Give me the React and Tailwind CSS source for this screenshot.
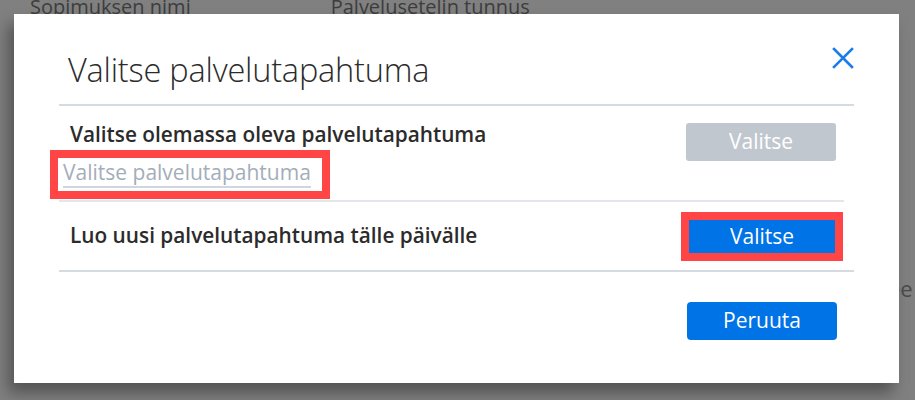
import React from 'react';

const font = { fontFamily: '"Open Sans", "Noto Sans", sans-serif' };

const App = () => {
  return (
    <div className="relative w-[915px] h-[400px] overflow-hidden bg-[#808080]" style={font}>
      {/* page behind the overlay */}
      <div className="flex gap-[140px] pl-[30px] -mt-[8px] text-[20px] text-[#3d3d3d]">
        <span>Sopimuksen nimi</span>
        <span>Palvelusetelin tunnus</span>
      </div>
      <div className="absolute left-[888px] top-[272px] text-[22px] text-[#4a4a4a]">ee</div>

      {/* modal */}
      <div className="absolute left-[14px] top-[14px] w-[885px] h-[369px] bg-white shadow-[-6px_10px_14px_rgba(0,0,0,0.35)]">
        <div className="px-[45px] pt-[34px]">
          <div className="flex items-start justify-between pl-[9px] pr-[0px]">
            <h1 className="text-[32.5px] font-light text-[#2b2b2b] leading-[44px] tracking-[-0.2px]">Valitse palvelutapahtuma</h1>
            <button className="text-[#1a7ee6] mt-[-1px]">
              <svg width="22" height="22" viewBox="0 0 22 22" fill="none" stroke="currentColor" strokeWidth="2.6" strokeLinecap="square">
                <path d="M2 2 L20 20 M20 2 L2 20" />
              </svg>
            </button>
          </div>
          <div className="mt-[12px] h-[2px] bg-[#d5dbe1]" />

          <div className="flex justify-between pt-[15px] h-[96px] border-b-2 border-[#e3e7eb] mr-[10px]">
            <div className="pl-[11px]">
              <div className="text-[20.8px] font-semibold text-[#2b2b2b] leading-[26px]">Valitse olemassa oleva palvelutapahtuma</div>
              <div className="-ml-[20px] mt-[3px] inline-block border-[8px] border-[#ff4545] pl-[5px] pr-[11px] h-[49px]">
                <span className="block text-[21px] text-[#a3adba] leading-[28px] border-b-2 border-[#d0d6dd]">Valitse palvelutapahtuma</span>
              </div>
            </div>
            <button disabled className="mt-[2px] mr-[8px] w-[150px] h-[38px] rounded-[3px] bg-[#c1c7cf] text-white text-[21px]">Valitse</button>
          </div>

          <div className="flex items-center justify-between h-[70px] border-b-2 border-[#d5dbe1]">
            <div className="pl-[11px] text-[20.8px] font-semibold text-[#2b2b2b]">Luo uusi palvelutapahtuma tälle päivälle</div>
            <div className="mr-[11px] border-[8px] border-[#ff4545]">
              <button className="w-[146px] h-[33px] bg-[#0073e6] text-white text-[21px] leading-none">Valitse</button>
            </div>
          </div>

          <div className="flex justify-end pt-[30px] pr-[17px]">
            <button className="w-[150px] h-[38px] rounded-[4px] bg-[#0073e6] text-white text-[21px]">Peruuta</button>
          </div>
        </div>
      </div>
    </div>
  );
};

export default App;
